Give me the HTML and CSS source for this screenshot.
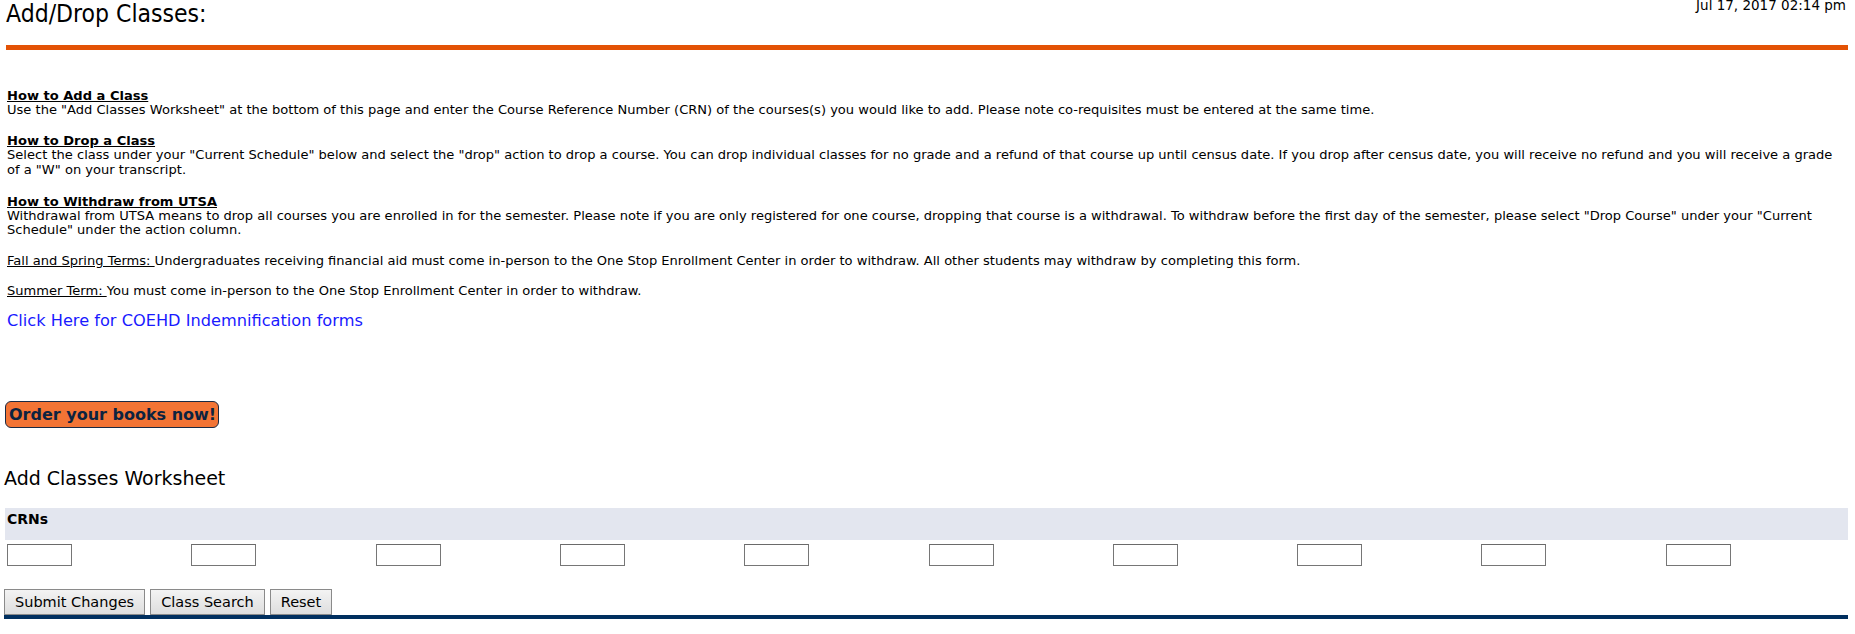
FILE: index.html
```html
<!DOCTYPE html>
<html>
<head>
<meta charset="utf-8">
<title>Add/Drop Classes</title>
<link rel="stylesheet" href="styles.css">
</head>
<body>
<div class="page">
  <div class="header">
    <h1 class="title">Add/Drop Classes:</h1>
    <div class="date">Jul 17, 2017 02:14 pm</div>
  </div>
  <div class="rule-orange"></div>

  <div class="info">
    <p><b class="u">How to Add a Class</b><br>Use the "Add Classes Worksheet" at the bottom of this page and enter the Course Reference Number (CRN) of the courses(s) you would like to add. Please note co-requisites must be entered at the same time.</p>
    <p class="drop"><b class="u">How to Drop a Class</b><br>Select the class under your "Current Schedule" below and select the "drop" action to drop a course. You can drop individual classes for no grade and a refund of that course up until census date. If you drop after census date, you will receive no refund and you will receive a grade of a "W" on your transcript.</p>
    <p><b class="u">How to Withdraw from UTSA</b><br>Withdrawal from UTSA means to drop all courses you are enrolled in for the semester. Please note if you are only registered for one course, dropping that course is a withdrawal. To withdraw before the first day of the semester, please select "Drop Course" under your "Current Schedule" under the action column.</p>
    <p><span class="u">Fall and Spring Terms: </span>Undergraduates receiving financial aid must come in-person to the One Stop Enrollment Center in order to withdraw. All other students may withdraw by completing this form.</p>
    <p><span class="u">Summer Term: </span>You must come in-person to the One Stop Enrollment Center in order to withdraw.</p>
    <p class="link-line"><a class="coehd" href="#">Click Here for COEHD Indemnification forms</a></p>
  </div>

  <div class="books"><button class="books-btn">Order your books now!</button></div>

  <h2 class="ws-title">Add Classes Worksheet</h2>

  <div class="crn">
    <div class="crn-head">CRNs</div>
    <div class="crn-row">
      <div class="crn-cell"><input class="crn-input" type="text"></div>
      <div class="crn-cell"><input class="crn-input" type="text"></div>
      <div class="crn-cell"><input class="crn-input" type="text"></div>
      <div class="crn-cell"><input class="crn-input" type="text"></div>
      <div class="crn-cell"><input class="crn-input" type="text"></div>
      <div class="crn-cell"><input class="crn-input" type="text"></div>
      <div class="crn-cell"><input class="crn-input" type="text"></div>
      <div class="crn-cell"><input class="crn-input" type="text"></div>
      <div class="crn-cell"><input class="crn-input" type="text"></div>
      <div class="crn-cell"><input class="crn-input" type="text"></div>
    </div>
  </div>

  <div class="actions">
    <button class="act-btn">Submit Changes</button>
    <button class="act-btn">Class Search</button>
    <button class="act-btn">Reset</button>
  </div>
  <div class="rule-navy"></div>
</div>
</body>
</html>
```

FILE: styles.css
```css
html, body {
  margin: 0;
  padding: 0;
  background: #ffffff;
}
body {
  font-family: "DejaVu Sans", Verdana, sans-serif;
  font-size: 13px;
  color: #000000;
}
.page {
  padding: 0 7px 0 4px;
}
.header {
  display: flex;
  justify-content: space-between;
  align-items: flex-start;
  height: 45px;
  padding-left: 2px;
}
.title {
  margin: 0;
  padding-top: 1px;
  font-family: "DejaVu Sans Condensed", "DejaVu Sans", sans-serif;
  font-weight: normal;
  font-size: 24.5px;
  line-height: 26px;
}
.date {
  font-size: 13.5px;
  line-height: 13px;
  margin-top: -1px;
  margin-right: 2px;
}
.rule-orange {
  height: 5px;
  margin-left: 2px;
  background: #e35205;
}
.info {
  margin-top: 39px;
  padding: 0 8px 0 3px;
  font-size: 13.06px;
}
.info p {
  margin: 0 0 16px;
  line-height: 14.4px;
}
.info .drop {
  margin-bottom: 17.5px;
}
.u {
  text-decoration: underline;
}
.info .link-line {
  margin: -2.5px 0 0;
  font-size: 16.2px;
  line-height: 17px;
}
.coehd {
  color: #1a1aff;
  text-decoration: none;
}
.books {
  margin-top: 72px;
  padding-left: 1px;
}
.books-btn {
  display: block;
  height: 27px;
  width: 214px;
  padding: 0 3px;
  margin: 0;
  border: 1px solid #1b2a44;
  border-radius: 6px;
  background: #f37435;
  color: #0c2340;
  font-family: "DejaVu Sans", Verdana, sans-serif;
  font-weight: bold;
  font-size: 16px;
  line-height: 25px;
  text-align: left;
  white-space: nowrap;
}
.ws-title {
  margin: 0;
  padding-top: 38px;
  font-weight: normal;
  font-size: 19px;
  line-height: 24px;
}
.crn {
  margin-top: 17.7px;
  padding-left: 1px;
}
.crn-head {
  height: 32px;
  box-sizing: border-box;
  padding: 4px 2px 0;
  background: #e3e6ef;
  font-weight: bold;
  font-size: 14px;
  line-height: 15px;
}
.crn-row {
  display: grid;
  grid-template-columns: repeat(10, 1fr);
  padding-top: 4px;
}
.crn-cell {
  padding-left: 2px;
}
.crn-input {
  display: block;
  box-sizing: border-box;
  width: 65px;
  height: 22px;
  margin: 0;
  padding: 1px 2px;
  border: 1px solid #767676;
  border-top-color: #6a6a6a;
  background: #ffffff;
  font-size: 12px;
}
.actions {
  display: flex;
  gap: 5px;
  margin-top: 23px;
}
.act-btn {
  box-sizing: border-box;
  height: 26px;
  margin: 0;
  padding: 0 10px;
  border: 1px solid #8a8a8a;
  border-radius: 0;
  background: linear-gradient(#f3f3f3, #dedede);
  color: #000000;
  font-family: "DejaVu Sans", Verdana, sans-serif;
  font-size: 14.5px;
  line-height: 24px;
}
.rule-navy {
  height: 4px;
  background: #002f5f;
}
```
